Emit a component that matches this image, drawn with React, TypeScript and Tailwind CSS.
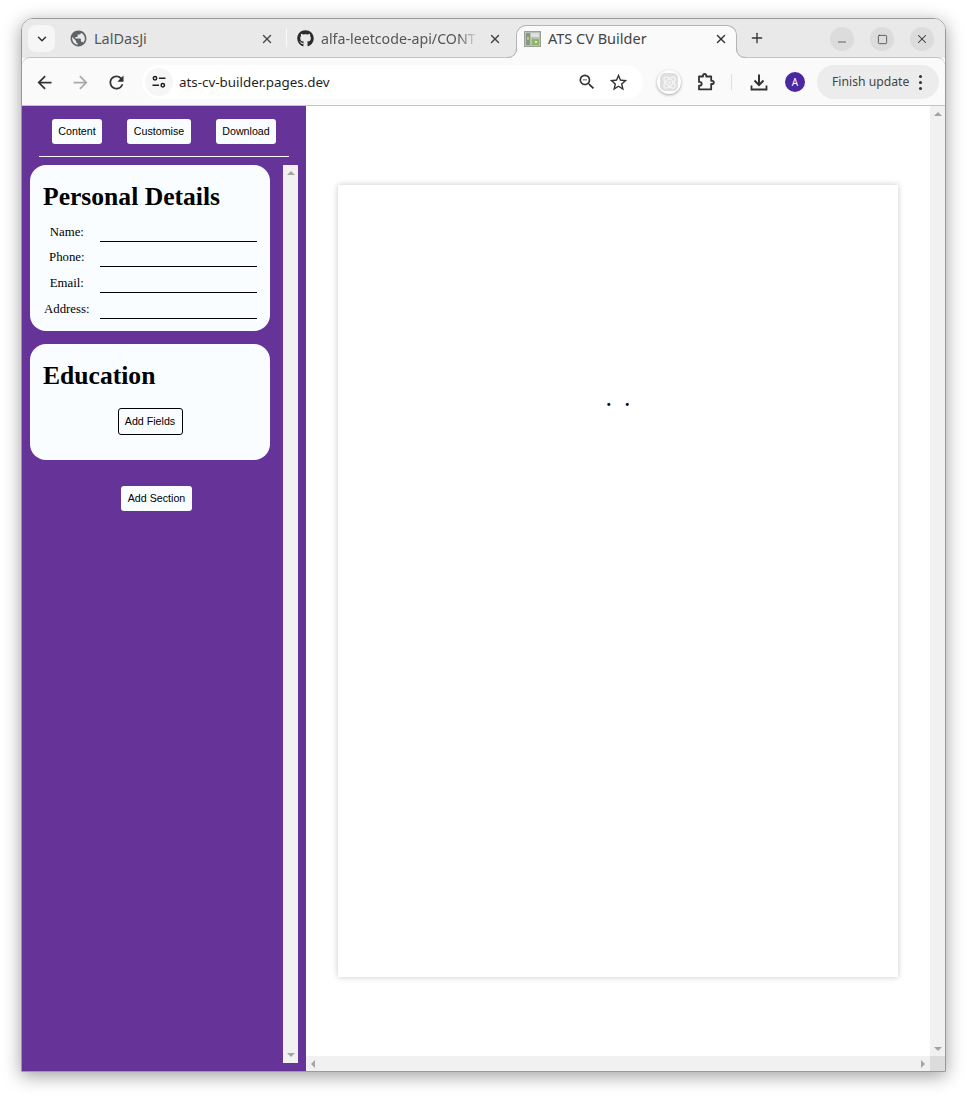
import React from 'react';
import { ChevronDown, Plus, Minus, Square, X, Atom } from 'lucide-react';
import { FaGithub } from 'react-icons/fa';
import { MdPublic, MdArrowBack, MdArrowForward, MdRefresh, MdZoomOut, MdStarBorder } from 'react-icons/md';

const uiFont = "font-['Noto_Sans',sans-serif]";

// Flared bottom corners of the active tab
const TabFlare = ({ side }: { side: 'left' | 'right' }) => (
  <svg width="10" height="10" viewBox="0 0 10 10" className={`absolute bottom-0 ${side === 'left' ? '-left-[10px]' : '-right-[10px]'}`}>
    {side === 'left' ? (
      <>
        <path d="M0 10 Q10 10 10 0 V10 Z" fill="#fafafa" />
        <path d="M0 9.5 Q9.5 9.5 9.5 0" fill="none" stroke="#b4b4b4" />
      </>
    ) : (
      <>
        <path d="M10 10 Q0 10 0 0 V10 Z" fill="#fafafa" />
        <path d="M10 9.5 Q0.5 9.5 0.5 0" fill="none" stroke="#b4b4b4" />
      </>
    )}
  </svg>
);

const Favicon = () => (
  <svg width="17" height="16" viewBox="0 0 17 16" className="shrink-0">
    <rect x="0.5" y="0.5" width="16" height="15" fill="#b9c0b4" stroke="#9aa298" />
    <rect x="2" y="2" width="4" height="12" fill="#8b958a" />
    <rect x="3" y="6" width="2" height="3" fill="#b6d34a" />
    <rect x="7" y="2" width="8" height="4" fill="#dfe2dc" />
    <rect x="8" y="8" width="7" height="6" fill="#8fb468" />
    <rect x="11" y="10" width="2" height="2" fill="#dfe8c8" />
  </svg>
);

const SiteSettings = () => (
  <svg width="16" height="16" viewBox="0 0 16 16" fill="none" stroke="#1f1f1f" strokeWidth="1.5">
    <circle cx="4" cy="4.2" r="1.7" />
    <path d="M8 4.2h6.5" />
    <circle cx="11.8" cy="11.2" r="1.7" />
    <path d="M1.5 11.2h6.5" />
  </svg>
);

const PuzzleIcon = () => (
  <svg width="18" height="18" viewBox="0 0 18 18" fill="none" stroke="#333" strokeWidth="1.8" strokeLinejoin="round">
    <path d="M2 3.5h4V2.6a1.6 1.6 0 0 1 3.2 0v.9h5v4.3h1a1.6 1.6 0 0 1 0 3.2h-1v5.4H2v-3.7h.8a1.9 1.9 0 0 0 0-3.8H2z" />
  </svg>
);

const DownloadIcon = () => (
  <svg width="18" height="18" viewBox="0 0 18 18" fill="none" stroke="#333" strokeWidth="2">
    <path d="M9 1.5v10M4.5 7.5 9 12l4.5-4.5" />
    <path d="M1.5 12.5v4h15v-4" strokeWidth="1.8" />
  </svg>
);

const Arrow = ({ dir }: { dir: 'up' | 'down' | 'left' | 'right' }) => {
  const pts = { up: '0,6 4,2 8,6', down: '0,2 8,2 4,6', left: '6,0 6,8 2,4', right: '2,0 2,8 6,4' }[dir];
  return (
    <svg width="8" height="8" viewBox="0 0 8 8" className="shrink-0">
      <polygon points={pts} fill="#a3a3a3" />
    </svg>
  );
};

const NavButton = ({ label, width }: { label: string; width: string }) => (
  <button className={`${width} h-[25px] pb-[2px] bg-[#f9fdff] rounded-[3px] text-[10.67px] text-black font-['Liberation_Sans',sans-serif]`}>
    {label}
  </button>
);

const Field = ({ label }: { label: string }) => (
  <div className="flex h-[25.7px] items-start">
    <label className="w-[50px] pt-[4.5px] text-center text-[12.8px] leading-[15px] text-black whitespace-nowrap">{label}</label>
    <div className="w-[158.5px] ml-[8px] h-[21.5px] border-b-[1.5px] border-black" />
  </div>
);

const Browser = () => (
  <>
    {/* Tab strip */}
    <div className={`h-[39px] bg-[#e9e9e9] flex items-start pt-[6px] pl-[6px] shrink-0 ${uiFont}`}>
      <div className="w-[27px] h-[27px] rounded-[8px] bg-[#f6f6f6] flex items-center justify-center">
        <ChevronDown size={14} strokeWidth={2.5} color="#333" />
      </div>
      <div className="w-[216px] ml-[15px] h-[27px] flex items-center">
        <MdPublic size={19} color="#5f6368" className="-ml-[1px] shrink-0" />
        <span className="ml-[6px] mt-[1px] text-[14.5px] text-[#555]">LalDasJi</span>
        <X size={14} strokeWidth={2.4} color="#444" className="ml-auto mr-[12px]" />
      </div>
      <div className="w-px h-[18px] mt-[4px] bg-[#fafafa]" />
      <div className="w-[229px] h-[27px] flex items-center pl-[10px]">
        <FaGithub size={17} color="#2b2b2b" className="shrink-0" />
        <span className="ml-[7px] mt-[1px] w-[157px] whitespace-nowrap text-[14.2px] text-[#555] [mask-image:linear-gradient(to_right,black_88%,transparent)]">
          alfa-leetcode-api/CONT
        </span>
        <X size={14} strokeWidth={2.4} color="#444" className="ml-[10px]" />
      </div>
      <div className="relative w-[221px] h-[33px] bg-[#fafafa] rounded-t-[10px] border border-b-0 border-[#b4b4b4] flex items-center pl-[7px] pb-[7px]">
        <TabFlare side="left" />
        <TabFlare side="right" />
        <Favicon />
        <span className="ml-[7px] text-[14.5px] text-[#444]">ATS CV Builder</span>
        <X size={14} strokeWidth={2.4} color="#333" className="ml-auto mr-[8px]" />
      </div>
      <Plus size={16} strokeWidth={2} color="#333" className="ml-[12px] mt-[5px]" />
      <div className="ml-auto flex gap-[16px] mr-[11px] mt-[2px]">
        <div className="w-[24px] h-[24px] rounded-full bg-[#dcdcdc] flex items-center justify-center">
          <Minus size={12} strokeWidth={1.5} color="#333" className="mt-[5px]" />
        </div>
        <div className="w-[24px] h-[24px] rounded-full bg-[#dcdcdc] flex items-center justify-center">
          <Square size={11} strokeWidth={1.6} color="#333" />
        </div>
        <div className="w-[24px] h-[24px] rounded-full bg-[#dcdcdc] flex items-center justify-center">
          <X size={14} strokeWidth={1.8} color="#333" />
        </div>
      </div>
    </div>
    {/* Toolbar */}
    <div className={`h-[49px] -mt-px pt-[1px] shrink-0 bg-[#fafafa] rounded-t-[8px] border-t border-b border-[#c4c4c4] flex items-center ${uiFont}`}>
      <div className="w-[120px] flex items-center pl-[12px] gap-[15px] shrink-0">
        <MdArrowBack size={21} color="#333" />
        <MdArrowForward size={21} color="#a9a9a9" />
        <MdRefresh size={21} color="#333" />
      </div>
      <div className="w-[501px] h-[34px] rounded-full bg-white flex items-center pl-[3px] pr-[14px]">
        <div className="w-[28px] h-[28px] rounded-full bg-[#f6f6f6] flex items-center justify-center">
          <SiteSettings />
        </div>
        <span className="ml-[6px] text-[13.4px] text-[#1f1f1f]">ats-cv-builder.pages.dev</span>
        <MdZoomOut size={20} color="#333" className="ml-auto" />
        <MdStarBorder size={21} color="#333" className="ml-[11px]" />
      </div>
      <div className="ml-[14px] w-[24px] h-[24px] rounded-full bg-white shadow-[0_1px_3px_rgba(0,0,0,0.35)] flex items-center justify-center">
        <div className="w-[18px] h-[18px] rounded-[5px] bg-[#dfdfdf] flex items-center justify-center">
          <Atom size={15} color="#f7f7f7" />
        </div>
      </div>
      <div className="ml-[16px]"><PuzzleIcon /></div>
      <div className="ml-[16px] w-px h-[16px] bg-[#dedede]" />
      <div className="ml-[18px]"><DownloadIcon /></div>
      <div className="ml-[17px] w-[20px] h-[20px] rounded-full bg-[#4b27a0] text-white text-[10px] flex items-center justify-center">A</div>
      <div className="ml-[12px] w-[122px] h-[34px] rounded-full bg-[#ececec] flex items-center pl-[15px]">
        <span className="mt-[1px] text-[12.2px] text-[#444] whitespace-nowrap">Finish update</span>
        <div className="ml-[10px] flex flex-col gap-[3px]">
          <span className="w-[3px] h-[3px] rounded-full bg-[#333]" />
          <span className="w-[3px] h-[3px] rounded-full bg-[#333]" />
          <span className="w-[3px] h-[3px] rounded-full bg-[#333]" />
        </div>
      </div>
    </div>
  </>
);

const Sidebar = () => (
  <aside className="w-[284px] shrink-0 bg-[#663399] flex flex-col font-['Liberation_Serif',serif]">
    <div className="h-[51px] shrink-0 mx-[17px] border-b border-[#f9fdff] flex justify-between items-start pt-[13px] px-[13px]">
      <NavButton label="Content" width="w-[50px]" />
      <NavButton label="Customise" width="w-[64px]" />
      <NavButton label="Download" width="w-[60px]" />
    </div>
    <div className="flex flex-1 mt-[8px] mb-[8px] ml-[8px] mr-[8px]">
      <div className="w-[253px] shrink-0">
        <section className="w-[240px] h-[166px] bg-[#f9fdff] rounded-[16px] pt-[17px] px-[13px]">
          <h2 className="text-[25.6px] leading-[30px] font-bold text-black">Personal Details</h2>
          <div className="mt-[8px] -ml-[1px]">
            <Field label="Name:" />
            <Field label="Phone:" />
            <Field label="Email:" />
            <Field label="Address:" />
          </div>
        </section>
        <section className="w-[240px] h-[116px] mt-[13px] bg-[#f9fdff] rounded-[16px] pt-[17px] px-[13px] flex flex-col">
          <h2 className="text-[25.6px] leading-[30px] font-bold text-black">Education</h2>
          <button className="self-center mt-[17px] w-[65px] h-[27px] pb-[2px] bg-[#f9fdff] border border-black rounded-[3px] text-[10.67px] text-black font-['Liberation_Sans',sans-serif]">
            Add Fields
          </button>
        </section>
        <div className="flex justify-center mt-[26px]">
          <NavButton label="Add Section" width="w-[71px]" />
        </div>
      </div>
      <div className="w-[15px] bg-[#f1f1f1] flex flex-col items-center justify-between py-[4px]">
        <Arrow dir="up" />
        <Arrow dir="down" />
      </div>
    </div>
  </aside>
);

const Preview = () => (
  <div className="flex-1 flex flex-col bg-white">
    <div className="flex flex-1">
      <main className="flex-1 pt-[79px] pl-[32px]">
        <div className="relative w-[560px] h-[792px] bg-white shadow-[0_0_6px_rgba(0,0,0,0.22)] font-['Liberation_Serif',serif] text-[18px] font-bold text-black flex justify-center pt-[205px] gap-[14px] leading-[20px]">
          <span>.</span>
          <span>.</span>
        </div>
      </main>
      <div className="w-[15px] bg-[#f1f1f1] flex flex-col items-center pt-[4px]">
        <Arrow dir="up" />
        <div className="mt-auto mb-[3px]"><Arrow dir="down" /></div>
      </div>
    </div>
    <div className="h-[15px] flex">
      <div className="flex-1 bg-[#f1f1f1] flex items-center justify-between px-[3px]">
        <Arrow dir="left" />
        <Arrow dir="right" />
      </div>
      <div className="w-[15px] bg-[#dcdcdc]" />
    </div>
  </div>
);

export default function App() {
  return (
    <div className="w-[967px] h-[1096px] bg-white pt-[18px] pl-[21px] overflow-hidden">
      <div className="w-[925px] h-[1054px] flex flex-col rounded-t-[12px] overflow-hidden border border-[#9a9a9a] shadow-[0_4px_18px_rgba(0,0,0,0.38)]">
        <Browser />
        <div className="flex flex-1 min-h-0">
          <Sidebar />
          <Preview />
        </div>
      </div>
    </div>
  );
}
